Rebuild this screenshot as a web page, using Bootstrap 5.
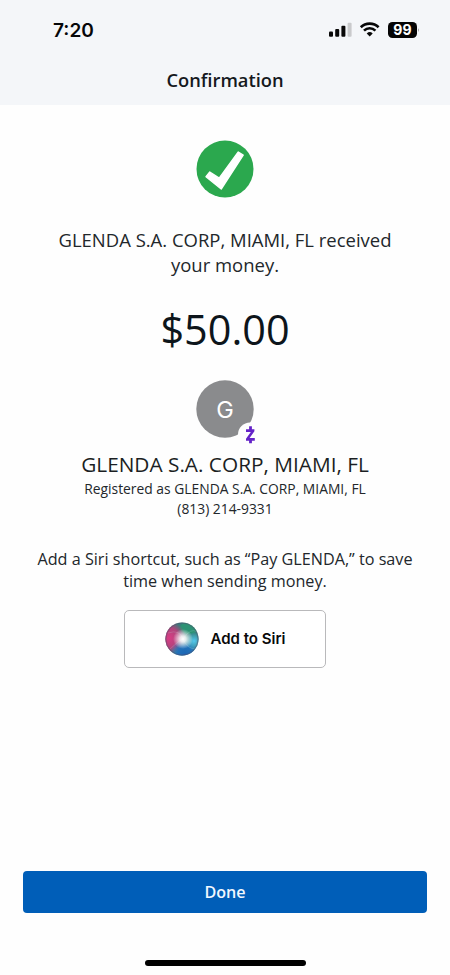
<!DOCTYPE html>
<html lang="en">
<head>
<meta charset="utf-8">
<meta name="viewport" content="width=device-width, initial-scale=1">
<title>Confirmation</title>
<link href="https://cdn.jsdelivr.net/npm/bootstrap@5.3.0/dist/css/bootstrap.min.css" rel="stylesheet">
<style>
body { font-family: "Open Sans", sans-serif; color: #22272b; background: #fefefe; }
.screen { height: 975px; width: 450px; }
.top-area { background: #f4f6f9; height: 105px; }
.status-bar { height: 60px; padding: 0 31px 0 53px; }
.clock { font: 600 19.1px/60px "Inter", sans-serif; color: #060708; }
.page-title { font-size: 18.3px; line-height: 40px; font-weight: 600; color: #15191d; }
.check-icon { margin-top: 35px; }
.headline { font-size: 18.48px; line-height: 25px; margin-top: 29px; }
.amount { font-size: 41.4px; line-height: 60px; margin-top: 22px; color: #0d151b; }
.avatar { margin-top: 21px; }
.payee { font-size: 20.8px; line-height: 28px; margin-top: 4px; margin-bottom: 1px; color: #1b1f23; }
.detail { font-size: 13.85px; line-height: 20px; }
.siri-note { font-size: 16.2px; line-height: 22px; margin-top: 29px; }
.siri-btn { width: 202px; height: 58px; margin-top: 18px; border: 1.5px solid #b9b9bb; border-radius: 5px; font: 600 15px/20px "Inter", sans-serif; color: #08090a; background: #fff; }
.siri-label { margin-left: 2px; margin-right: 2px; }
.done-btn { height: 42px; border-radius: 4px; margin: 0 23px; background: #005eb8; color: #f1f8ff; font-size: 16.1px; font-weight: 600; border: 0; }
.home-bar { width: 161px; height: 6px; background: #000; margin: 47px 0 9px; }
</style>
</head>
<body>
<div class="screen d-flex flex-column overflow-hidden">
  <header class="top-area flex-shrink-0">
    <div class="status-bar d-flex justify-content-between align-items-center">
      <span class="clock">7:20</span>
      <svg width="90" height="18" viewBox="0 0 90 18">
        <g fill="#080808">
          <rect x="0" y="10.5" width="4" height="5.2" rx="1"/>
          <rect x="6.2" y="8" width="4" height="7.7" rx="1"/>
          <rect x="12.4" y="4.8" width="4" height="10.9" rx="1"/>
          <rect x="18.6" y="1.8" width="4" height="13.9" rx="1" fill="#c9cacc"/>
        </g>
        <g fill="none" stroke="#080808" stroke-width="2.6">
          <path d="M31.8 6.3a12.7 12.7 0 0 1 17.8 0"/>
          <path d="M35 9.6a8.1 8.1 0 0 1 11.4 0"/>
        </g>
        <path d="M40.7 15.6l-3-3.1a4.3 4.3 0 0 1 6 0z" fill="#080808"/>
        <rect x="59" y="1" width="29" height="16" rx="4.5" fill="#050505"/>
        <path d="M89 7.2q1 .4 1 1.8t-1 1.8z" fill="#aaa"/>
        <text x="73.4" y="14" text-anchor="middle" font-family="Inter, sans-serif" font-weight="700" font-size="14" fill="#fff">99</text>
      </svg>
    </div>
    <h1 class="page-title text-center mb-0">Confirmation</h1>
  </header>
  <main class="d-flex flex-column align-items-center text-center flex-grow-1">
    <svg class="check-icon flex-shrink-0" width="58" height="58" viewBox="0 0 58 58">
      <circle cx="29" cy="29" r="28.5" fill="#2ba84e"/>
      <path d="M10 36.8L13.8 32L23.2 38.2L42.3 12L47.2 15.2L25.2 49Z" fill="#fff" stroke="#fff" stroke-width="1.4" stroke-linejoin="round"/>
    </svg>
    <p class="headline mb-0">GLENDA S.A. CORP, MIAMI, FL received<br>your money.</p>
    <div class="amount">$50.00</div>
    <svg class="avatar flex-shrink-0" width="66" height="66" viewBox="-4 0 66 66">
      <circle cx="29" cy="29" r="28.7" fill="#8a8b8d"/>
      <circle cx="54" cy="54.5" r="12" fill="#fefefe"/>
      <text x="29" y="37.5" text-anchor="middle" font-family="Inter, sans-serif" font-size="23.5" fill="#fff">G</text>
      <path d="M50 49.3H58.4V51.2L53.6 58H58.8V60.8H50V58.8L54.8 52.1H50ZM53.1 46.3H55.9V50H53.1ZM53.1 60H55.9V63.3H53.1Z" fill="#6423c8"/>
    </svg>
    <h2 class="payee">GLENDA S.A. CORP, MIAMI, FL</h2>
    <div class="detail">Registered as GLENDA S.A. CORP, MIAMI, FL</div>
    <div class="detail">(813) 214-9331</div>
    <p class="siri-note mb-0">Add a Siri shortcut, such as “Pay GLENDA,” to save<br>time when sending money.</p>
    <button type="button" class="btn siri-btn d-flex align-items-center justify-content-center p-0">
      <svg class="me-2" width="38" height="38" viewBox="0 0 38 38">
        <defs>
          <clipPath id="orb"><circle cx="19" cy="19" r="16.6"/></clipPath>
          <radialGradient id="glow"><stop offset="0" stop-color="#fff"/><stop offset=".3" stop-color="#fff" stop-opacity=".85"/><stop offset="1" stop-color="#fff" stop-opacity="0"/></radialGradient>
          <radialGradient id="pink"><stop offset="0" stop-color="#d83c84"/><stop offset=".6" stop-color="#c63a7c" stop-opacity=".85"/><stop offset="1" stop-color="#b83a78" stop-opacity="0"/></radialGradient>
          <radialGradient id="blue"><stop offset="0" stop-color="#1c66b4"/><stop offset=".5" stop-color="#1f70c0" stop-opacity=".9"/><stop offset="1" stop-color="#2a8cd8" stop-opacity="0"/></radialGradient>
          <radialGradient id="cyan"><stop offset="0" stop-color="#52c8f0"/><stop offset="1" stop-color="#52c8f0" stop-opacity="0"/></radialGradient>
        </defs>
        <g clip-path="url(#orb)">
          <rect width="38" height="38" fill="#34807a"/>
          <ellipse cx="26" cy="8" rx="9" ry="6" fill="#2a9a72" opacity=".7"/>
          <circle cx="6" cy="18" r="17" fill="url(#pink)"/>
          <circle cx="22" cy="34" r="15" fill="url(#blue)"/>
          <circle cx="31" cy="21" r="9" fill="url(#cyan)"/>
          <path d="M5 13Q17 9 20 19Q28 7 34 12M19 19Q10 26 7 29M20 19Q24 29 33 29" fill="none" stroke="#bce0e3" stroke-width="1" opacity=".2"/>
          <circle cx="20" cy="19" r="10" fill="url(#glow)"/>
        </g>
        <circle cx="19" cy="19" r="16.1" fill="none" stroke="#5a466b" stroke-width="1" opacity=".5"/>
      </svg>
      <span class="siri-label">Add to Siri</span>
    </button>
  </main>
  <footer class="d-flex flex-column align-items-center flex-shrink-0">
    <div class="w-100 d-flex"><button type="button" class="btn done-btn flex-grow-1 p-0">Done</button></div>
    <div class="home-bar rounded-pill"></div>
  </footer>
</div>
<script src="https://cdn.jsdelivr.net/npm/bootstrap@5.3.0/dist/js/bootstrap.bundle.min.js"></script>
</body>
</html>
